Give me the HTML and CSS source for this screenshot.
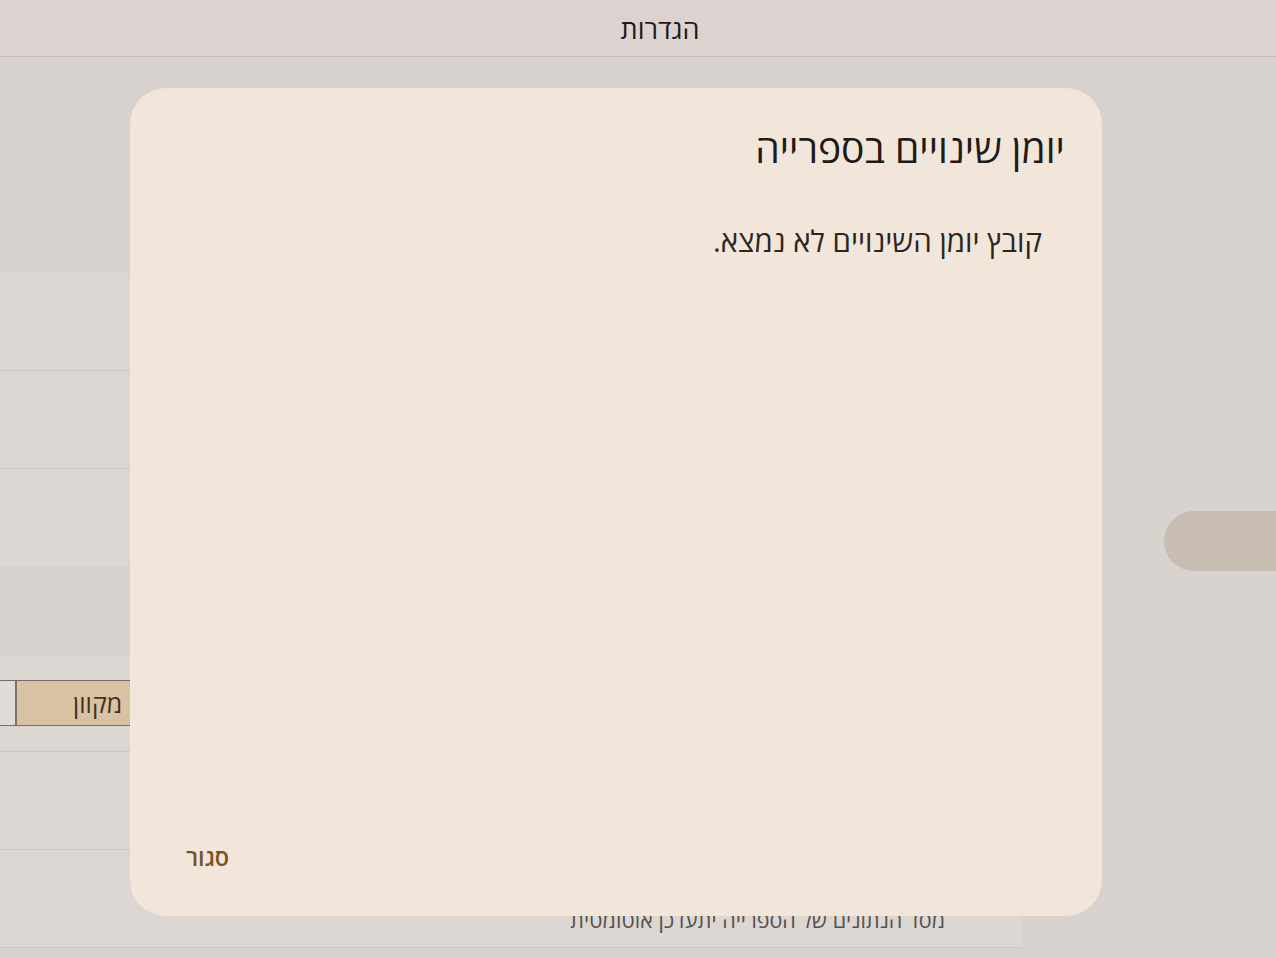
FILE: index.html
```html
<!DOCTYPE html>
<html lang="he" dir="rtl">
<head>
    <meta charset="utf-8">
    <title>הגדרות</title>
    <link rel="stylesheet" href="styles.css">
</head>
<body>
    <header class="appbar">
        <h1 class="appbar-title">הגדרות</h1>
    </header>

    <div class="main">
        <nav class="rail">
            <div class="rail-pill"></div>
        </nav>

        <section class="settings">
            <div class="settings-top"></div>
            <div class="row"></div>
            <div class="row"></div>
            <div class="row row-last"></div>
            <div class="section-gap"></div>
            <div class="row row-control">
                <div class="segmented">
                    <div class="segment segment-on">מקוון</div>
                    <div class="segment"></div>
                </div>
            </div>
            <div class="row"></div>
            <div class="row row-sub">
                <p class="row-subtitle">מסד הנתונים של הספרייה יתעדכן אוטומטית</p>
            </div>
        </section>
    </div>

    <!-- דיאלוג יומן שינויים -->
    <div class="dialog">
        <h2 class="dialog-title">יומן שינויים בספרייה</h2>
        <p class="dialog-body">קובץ יומן השינויים לא נמצא.</p>
        <div class="dialog-actions">
            <button class="text-button">סגור</button>
        </div>
    </div>
</body>
</html>
```

FILE: styles.css
```css
body {
    font-family: 'Open Sans', 'DejaVu Sans', sans-serif;
    margin: 0;
    padding: 0;
    background-color: #d7d2cd;
    color: #221c18;
    height: 100vh;
    overflow: hidden;
}

.appbar {
    height: 56px;
    background-color: #dcd3d1;
    border-bottom: 1px solid #c4bfba;
    display: flex;
    align-items: center;
    justify-content: center;
    padding-left: 44px;
}

.appbar-title {
    margin: 0;
    font-size: 27px;
    font-weight: 400;
    color: #1e1a18;
}

.main {
    display: flex;
    justify-content: space-between;
    height: calc(100vh - 57px);
}

.rail {
    width: 130px;
    background-color: #d8d3ce;
    padding-top: 454px;
}

.rail-pill {
    height: 60px;
    margin-right: -30px;
    margin-left: 18px;
    border-radius: 30px;
    background-color: #c7bdb2;
}

.settings {
    width: 1022px;
    display: flex;
    flex-direction: column;
}

.settings-top {
    height: 216px;
}

.row {
    height: 97px;
    background-color: #dcd7d3;
    border-bottom: 1px solid #d0c6c0;
    display: flex;
    align-items: center;
}

.row-last {
    border-bottom: none;
}

.section-gap {
    height: 90px;
}

.row-control {
    height: 94px;
    justify-content: flex-end;
    padding-bottom: 1px;
}

.segmented {
    display: flex;
    height: 44px;
    margin-left: -40px;
    border-top: 1px solid #776d63;
    border-bottom: 1px solid #776d63;
}

.segment {
    width: 55px;
    background-color: #e1dbd7;
}

.segment-on {
    width: 240px;
    box-sizing: border-box;
    background-color: #d9c2a4;
    border-left: 2px solid #7d7267;
    color: #45301f;
    font-size: 25px;
    line-height: 44px;
    text-align: left;
    padding-left: 56px;
}

.row-sub {
    align-items: flex-end;
}

.row-subtitle {
    margin: 0 77px 13px 0;
    font-size: 21.5px;
    color: #57514c;
}

/* דיאלוג */
.dialog {
    position: fixed;
    top: 88px;
    left: 130px;
    width: 972px;
    height: 828px;
    box-sizing: border-box;
    border-radius: 36px;
    background-color: #f2e6db;
    padding: 34px 37px 39px 44px;
    display: flex;
    flex-direction: column;
}

.dialog-title {
    margin: 0;
    font-size: 39px;
    font-weight: 400;
    line-height: 52px;
    color: #211b17;
}

.dialog-body {
    margin: 47px 23px 0 0;
    font-size: 29.5px;
    line-height: 40px;
    color: #2c2520;
    flex: 1;
}

.dialog-actions {
    display: flex;
    justify-content: flex-end;
}

.text-button {
    font-family: inherit;
    font-size: 23.5px;
    font-weight: 600;
    color: #7a531f;
    background: none;
    border: none;
    height: 40px;
    padding: 0 12px;
}
```
